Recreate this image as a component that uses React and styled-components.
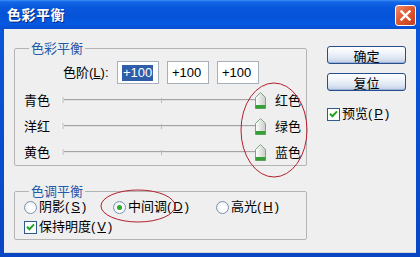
import React from "react";
import styled, { createGlobalStyle } from "styled-components";

const Global = createGlobalStyle`
  html, body { margin: 0; padding: 0; background: #fff; }
  body {
    font-family: "Liberation Sans", "Noto Sans CJK SC", sans-serif;
    font-size: 13px;
    color: #000;
  }
`;

const Window = styled.div`
  position: relative;
  width: 420px;
  height: 257px;
  display: flex;
  flex-direction: column;
  overflow: hidden;
`;

const TitleBar = styled.div`
  height: 29px;
  flex: 0 0 29px;
  display: flex;
  align-items: center;
  justify-content: space-between;
  padding: 0 4px 0 7px;
  box-sizing: border-box;
  background: linear-gradient(
    to bottom,
    #3d8ff5 0px,
    #1466e6 2px,
    #0757dc 8px,
    #0553d8 16px,
    #0759e2 24px,
    #0a4fd0 29px
  );
`;

const Title = styled.div`
  font-family: "Noto Sans CJK SC", sans-serif;
  font-weight: 700;
  font-size: 14px;
  color: #fff;
  letter-spacing: 0.5px;
  text-shadow: 1px 1px 0 #0a2a80;
  margin-top: -1px;
`;

const CloseButton = styled.div`
  width: 21px;
  height: 21px;
  margin-top: 1px;
  box-sizing: border-box;
  border: 1px solid #fff;
  border-radius: 3px;
  background: linear-gradient(135deg, #f08a6a 0%, #e05a34 45%, #c23e18 100%);
  display: flex;
  align-items: center;
  justify-content: center;
`;

const Frame = styled.div`
  flex: 1;
  display: flex;
  padding: 0 4px 4px;
  background: linear-gradient(to bottom, #0a55da, #0846c4);
`;

const Body = styled.div`
  flex: 1;
  display: flex;
  gap: 20px;
  padding: 12px 0 0 10px;
  background: #efefef;
  box-shadow: inset 0 -1px 0 #d8d8d8;
`;

const LeftColumn = styled.div`
  width: 293px;
  display: flex;
  flex-direction: column;
  gap: 18px;
`;

const Group = styled.fieldset`
  margin: 0;
  padding: ${p => p.$pad};
  border: 1px solid #b4b4b4;
  border-radius: 2px;
  min-width: 0;
  box-sizing: border-box;
`;

const Legend = styled.legend`
  font-family: "Noto Sans CJK SC", sans-serif;
  font-size: 13px;
  line-height: 14px;
  height: 14px;
  color: #2558a8;
  padding: 0 2px;
  margin-left: 5px;
`;

const LevelRow = styled.div`
  display: flex;
  align-items: center;
  height: 23px;
  padding-left: 39px;
  margin-bottom: 3px;
`;

const LevelLabel = styled.span`
  width: 54px;
  line-height: 14px;
`;

const Inputs = styled.div`
  display: flex;
  gap: 8px;
`;

const NumberBox = styled.div`
  width: 42px;
  height: 23px;
  box-sizing: border-box;
  border: 1px solid #a7b0ba;
  background: #fff;
  display: flex;
  align-items: center;
  padding-left: 4px;
  font-size: 13px;
`;

const Selected = styled.span`
  background: #2f5da8;
  color: #fff;
  line-height: 16px;
  padding: 0 1px;
`;

const SliderRow = styled.div`
  display: flex;
  align-items: center;
  height: 26px;
`;

const ColorLabel = styled.span`
  font-family: "Noto Sans CJK SC", sans-serif;
  width: ${p => p.$w}px;
  line-height: 14px;
`;

const Track = styled.div`
  position: relative;
  width: 204px;
  height: 17px;
  margin-right: 9px;

  &::before {
    content: "";
    position: absolute;
    left: 0;
    top: 7px;
    width: 196px;
    height: 1px;
    background: #a3a3a3;
    border-bottom: 1px solid #e2e2e2;
  }
  &::after {
    content: "";
    position: absolute;
    left: 99px;
    top: 6px;
    width: 1px;
    height: 5px;
    background: #b9b9b9;
  }
`;

const EndCap = styled.span`
  position: absolute;
  left: -1px;
  top: 5px;
  width: 2px;
  height: 6px;
  background: #d6d6d6;
  border-left: 1px solid #f8f8f8;
`;

const Thumb = styled.svg`
  position: absolute;
  top: 0;
`;

const ToneRow = styled.div`
  display: flex;
  align-items: center;
  height: 16px;
`;

const Option = styled.label`
  display: flex;
  align-items: center;
  gap: 2px;
  width: ${p => (p.$w ? `${p.$w}px` : "auto")};
  line-height: 14px;
`;

const Radio = styled.span`
  width: 13px;
  height: 13px;
  box-sizing: border-box;
  border-radius: 50%;
  border: 1px solid #7b92b4;
  background: radial-gradient(circle at 60% 60%, #fff 30%, #dfe3ea 100%);
  display: flex;
  align-items: center;
  justify-content: center;

  &::after {
    content: "";
    width: 5px;
    height: 5px;
    border-radius: 50%;
    background: ${p => (p.$on ? "#2aa82a" : "transparent")};
  }
`;

const Check = styled.span`
  width: 13px;
  height: 13px;
  box-sizing: border-box;
  border: 1px solid #2f5a8c;
  background: #fff;
  display: flex;
  align-items: center;
  justify-content: center;
`;

const RightColumn = styled.div`
  width: 79px;
  display: flex;
  flex-direction: column;
  padding-top: 5px;
`;

const Button = styled.div`
  height: 18px;
  box-sizing: border-box;
  border: 1px solid #264e8e;
  border-radius: 3px;
  background: linear-gradient(to bottom, #ffffff 0%, #f1f5fb 35%, #d9e3f1 75%, #bccbe3 100%);
  box-shadow: inset 0 -1px 0 #9fb4d6;
  display: flex;
  align-items: center;
  justify-content: center;
  font-family: "Noto Sans CJK SC", sans-serif;
  font-size: 13px;
  margin-bottom: 9px;
`;

const PreviewRow = styled(Option)`
  margin-top: 7px;
`;

const Annotations = styled.svg`
  position: absolute;
  left: 0;
  top: 0;
  pointer-events: none;
`;

const U = styled.u`
  text-underline-offset: 1px;
`;

const Tick = () => (
  <svg width="9" height="8" viewBox="0 0 9 8">
    <path d="M1 3.8 L3.4 6.2 L8 1.4" fill="none" stroke="#21a121" strokeWidth="2" />
  </svg>
);

const ThumbIcon = ({ left }) => (
  <Thumb width="11" height="17" viewBox="0 0 11 17" style={{ left }}>
    <defs>
      <linearGradient id="thumbFill" x1="0" x2="1" y1="0" y2="0">
        <stop offset="0" stopColor="#ffffff" />
        <stop offset="1" stopColor="#c8cec8" />
      </linearGradient>
    </defs>
    <path d="M0.5 5.5 L5.5 0.5 L10.5 5.5 V16.5 H0.5 Z" fill="url(#thumbFill)" stroke="#7fa57f" />
    <rect x="0.5" y="13" width="10" height="3.5" fill="#35a035" />
  </Thumb>
);

const sliders = [
  { left: "青色", right: "红色", value: 100 },
  { left: "洋红", right: "绿色", value: 100 },
  { left: "黄色", right: "蓝色", value: 100 },
];

export default function App() {
  return (
    <>
      <Global />
      <Window>
        <TitleBar>
          <Title>色彩平衡</Title>
          <CloseButton>
            <svg width="11" height="11" viewBox="0 0 11 11">
              <path d="M1.5 1.5 L9.5 9.5 M9.5 1.5 L1.5 9.5" stroke="#fff" strokeWidth="2.4" strokeLinecap="square" />
            </svg>
          </CloseButton>
        </TitleBar>
        <Frame>
          <Body>
            <LeftColumn>
              <Group $pad="6px 0 0 9px">
                <Legend>色彩平衡</Legend>
                <LevelRow>
                  <LevelLabel>色阶(<U>L</U>):</LevelLabel>
                  <Inputs>
                    <NumberBox><Selected>+100</Selected></NumberBox>
                    <NumberBox>+100</NumberBox>
                    <NumberBox>+100</NumberBox>
                  </Inputs>
                </LevelRow>
                {sliders.map(s => (
                  <SliderRow key={s.left}>
                    <ColorLabel $w={38}>{s.left}</ColorLabel>
                    <Track>
                      <EndCap />
                      <ThumbIcon left={((s.value + 100) / 200) * 193} />
                    </Track>
                    <ColorLabel>{s.right}</ColorLabel>
                  </SliderRow>
                ))}
              </Group>
              <Group $pad="1px 0 4px 9px">
                <Legend>色调平衡</Legend>
                <ToneRow>
                  <Option $w={89}><Radio />阴影(<U>S</U>)</Option>
                  <Option $w={103}><Radio $on />中间调(<U>D</U>)</Option>
                  <Option><Radio />高光(<U>H</U>)</Option>
                </ToneRow>
                <ToneRow style={{ marginTop: 4 }}>
                  <Option><Check><Tick /></Check>保持明度(<U>V</U>)</Option>
                </ToneRow>
              </Group>
            </LeftColumn>
            <RightColumn>
              <Button>确定</Button>
              <Button>复位</Button>
              <PreviewRow><Check><Tick /></Check>预览(<U>P</U>)</PreviewRow>
            </RightColumn>
          </Body>
        </Frame>
        <Annotations width="420" height="257" viewBox="0 0 420 257">
          <ellipse cx="274" cy="130" rx="33" ry="47" fill="none" stroke="#b3202c" strokeWidth="1" />
          <ellipse cx="138" cy="206" rx="37" ry="16" fill="none" stroke="#b3202c" strokeWidth="1" />
        </Annotations>
      </Window>
    </>
  );
}
